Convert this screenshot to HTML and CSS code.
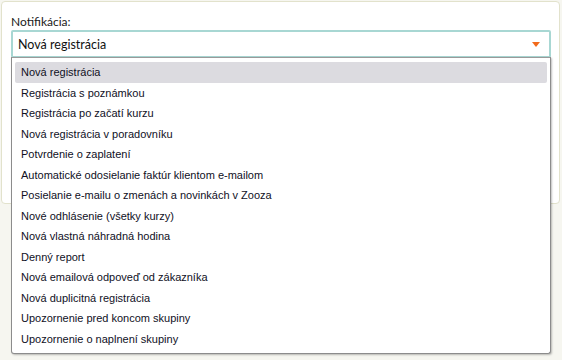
FILE: index.html
```html
<!DOCTYPE html>
<html lang="sk">
<head>
<meta charset="utf-8">
<title>Notifikácia</title>
<link rel="stylesheet" href="styles.css">
</head>
<body>
<div class="card">
  <label class="label">Notifikácia:</label>
  <div class="select-wrap">
    <div class="select">
      <span class="select-value">Nová registrácia</span>
      <svg class="caret" width="8" height="5" viewBox="0 0 8 5"><path d="M0 0H8L4 5Z" fill="#f26a1b"/></svg>
    </div>
    <ul class="listbox">
      <li class="option selected">Nová registrácia</li>
      <li class="option">Registrácia s poznámkou</li>
      <li class="option">Registrácia po začatí kurzu</li>
      <li class="option">Nová registrácia v poradovníku</li>
      <li class="option">Potvrdenie o zaplatení</li>
      <li class="option">Automatické odosielanie faktúr klientom e-mailom</li>
      <li class="option">Posielanie e-mailu o zmenách a novinkách v Zooza</li>
      <li class="option">Nové odhlásenie (všetky kurzy)</li>
      <li class="option">Nová vlastná náhradná hodina</li>
      <li class="option">Denný report</li>
      <li class="option">Nová emailová odpoveď od zákazníka</li>
      <li class="option">Nová duplicitná registrácia</li>
      <li class="option">Upozornenie pred koncom skupiny</li>
      <li class="option">Upozornenie o naplnení skupiny</li>
    </ul>
  </div>
</div>
</body>
</html>
```
FILE: styles.css
```css
html, body {
  margin: 0;
  padding: 0;
}
body {
  background: #f6f6f0;
  width: 562px;
  height: 360px;
  overflow: hidden;
  font-family: "Lato", "Liberation Sans", sans-serif;
}
.card {
  margin: 1px 2px 0 1px;
  height: 203px;
  background: #fff;
  border: 1px solid #e2e2cc;
  border-radius: 4px;
  padding: 12px 8px 0 9px;
  box-sizing: border-box;
}
.label {
  display: block;
  font-size: 12px;
  color: #1a1a1a;
  line-height: 15px;
  margin-bottom: 1px;
}
.select-wrap {
  position: relative;
}
.select {
  height: 28px;
  box-sizing: border-box;
  border: 2px solid #a8d7d3;
  border-radius: 2px;
  display: flex;
  align-items: center;
  justify-content: space-between;
  padding: 0 9px 0 5px;
  font-size: 12.5px;
  color: #111;
}
.caret {
  display: block;
}
.listbox {
  position: absolute;
  left: 0;
  top: 27px;
  width: 540px;
  box-sizing: border-box;
  margin: 0;
  padding: 4px 3px 4px 3px;
  list-style: none;
  background: #fff;
  border: 1px solid #8c8c8c;
  border-top-color: #9a9a9a;
  border-radius: 0 0 3px 3px;
  box-shadow: 1px 1px 2px rgba(0, 0, 0, 0.25);
  font-family: "Liberation Sans", Arial, sans-serif;
  font-size: 11px;
  color: #10101e;
}
.option {
  height: 20.5px;
  line-height: 20.5px;
  padding-left: 6px;
  border-radius: 2px;
  white-space: nowrap;
}
.option.selected {
  background: #dcdbe0;
}
```
